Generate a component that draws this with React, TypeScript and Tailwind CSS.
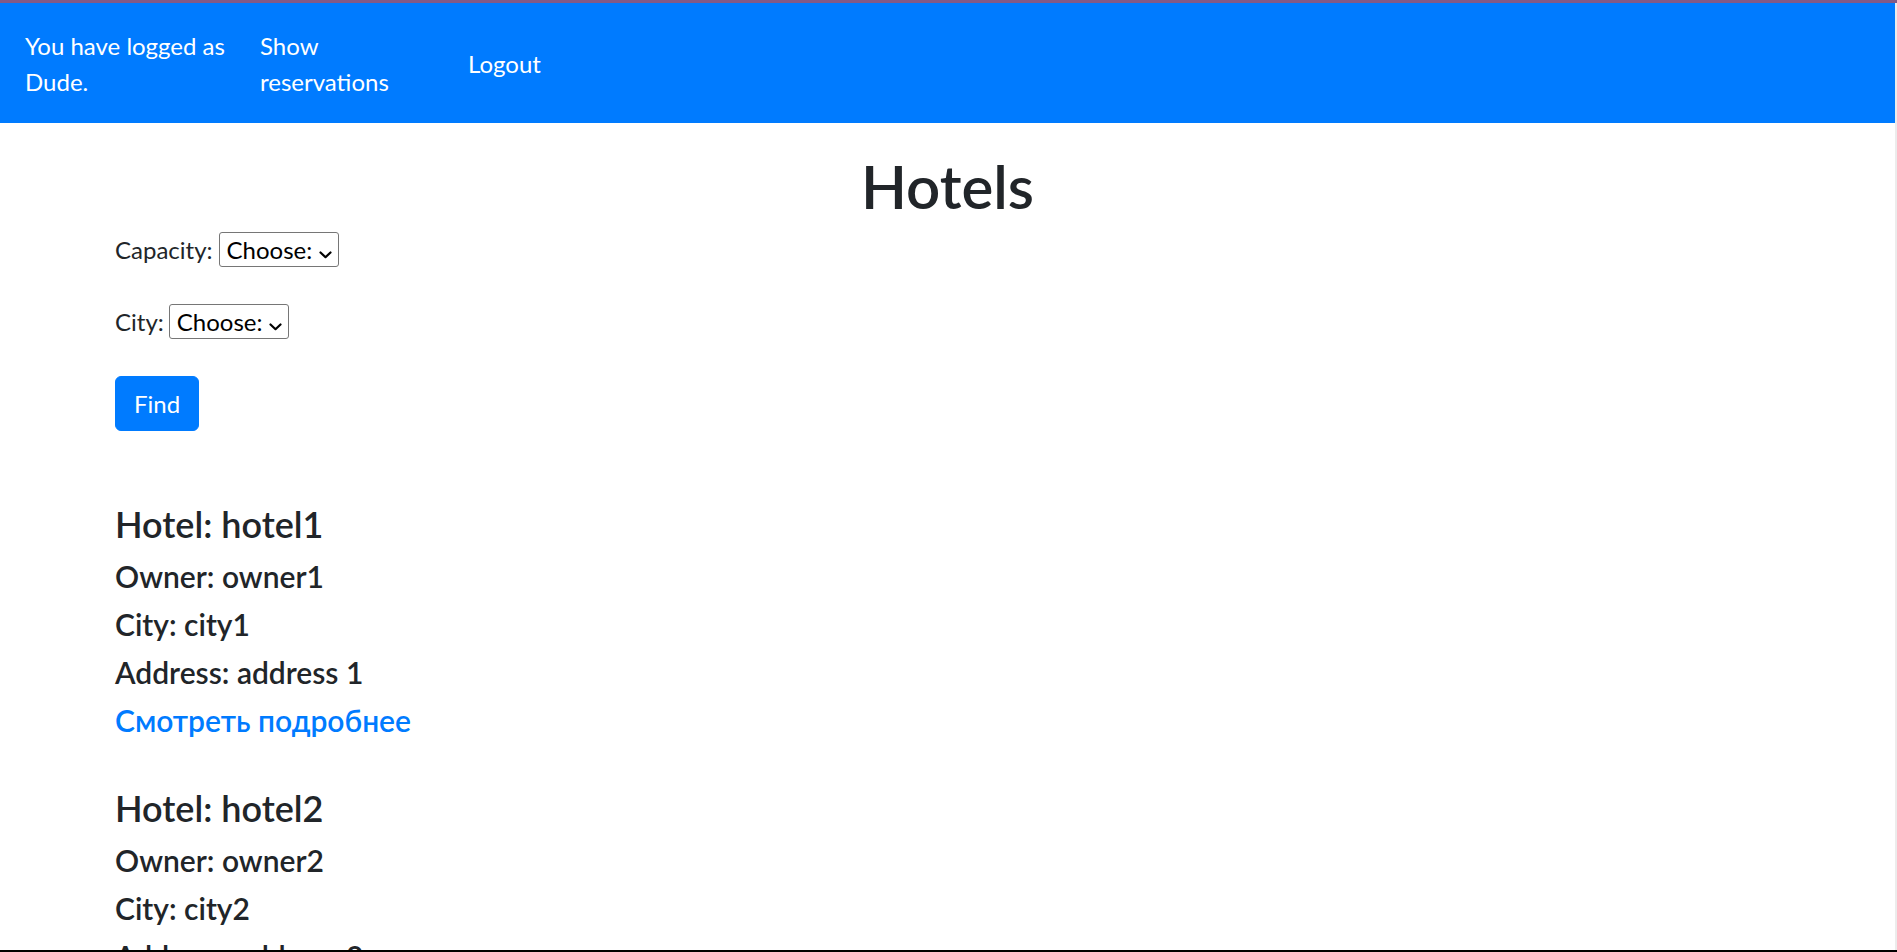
import { useState } from 'react';

const hotels = [
  { id: 1, name: 'hotel1', owner: 'owner1', city: 'city1', address: 'address 1' },
  { id: 2, name: 'hotel2', owner: 'owner2', city: 'city2', address: 'address 2' },
];

const font = "font-['Lato','Noto_Sans',sans-serif]";

const Chevron = () => (
  <svg
    className="pointer-events-none absolute right-[7px] top-[19px] h-[8px] w-[13px]"
    viewBox="0 0 13 8"
    fill="none"
    stroke="#000"
    strokeWidth="2.2"
    strokeLinecap="round"
    strokeLinejoin="round"
  >
    <path d="M1.5 1.5 6.5 6.2 11.5 1.5" />
  </svg>
);

const ChooseSelect = ({ value, onChange }: { value: string; onChange: (v: string) => void }) => (
  <div className="relative">
    <select
      value={value}
      onChange={(e) => onChange(e.target.value)}
      className={`${font} h-[35px] w-[120px] appearance-none rounded-[3px] border border-[#767676] bg-white pl-[7px] pr-[24px] text-[24px] leading-[33px] text-black`}
    >
      <option value="">Choose:</option>
      <option value="1">1</option>
      <option value="2">2</option>
    </select>
    <Chevron />
  </div>
);

export default function App() {
  const [capacity, setCapacity] = useState('');
  const [city, setCity] = useState('');

  return (
    <div className={`${font} flex h-[952px] w-full flex-col overflow-hidden bg-white text-[#212529]`}>
      <div className="h-[3px] shrink-0 bg-[#835a87]" />

      <div className="flex min-h-0 flex-1">
        <div className="min-w-0 flex-1 overflow-hidden">
          <nav className="flex h-[120px] items-center bg-[#007bff] pt-[2px] pl-[25px] text-[24px] leading-[36px] text-white">
            <div className="w-[235px]">
              You have logged as
              <br />
              Dude.
            </div>
            <a href="#" className="w-[208px]">
              Show
              <br />
              reservations
            </a>
            <a href="#">Logout</a>
          </nav>

          <main className="mx-auto w-[1710px] px-[22.5px]">
            <h1 className="mt-[27px] mb-[10px] text-center text-[60px] leading-[72px] font-semibold">Hotels</h1>

            <form className="flex flex-col items-start gap-[37px] text-[24px] leading-[36px]" onSubmit={(e) => e.preventDefault()}>
              <label className="flex h-[35px] items-center gap-[6px]">
                Capacity:
                <ChooseSelect value={capacity} onChange={setCapacity} />
              </label>
              <label className="flex h-[35px] items-center gap-[5px]">
                City:
                <ChooseSelect value={city} onChange={setCity} />
              </label>
              <button
                type="submit"
                className="rounded-[6px] border border-[#007bff] bg-[#007bff] px-[18px] py-[9px] text-[24px] leading-[35px] text-white"
              >
                Find
              </button>
            </form>

            <div className="mt-[72px] flex flex-col gap-[37px]">
              {hotels.map((h) => (
                <div key={h.id} className="flex flex-col">
                  <h4 className="mb-[12px] text-[36px] leading-[43px] font-semibold">Hotel: {h.name}</h4>
                  <h5 className="mb-[12px] text-[30px] leading-[36px] font-semibold">Owner: {h.owner}</h5>
                  <h5 className="mb-[12px] text-[30px] leading-[36px] font-semibold">City: {h.city}</h5>
                  <h5 className="mb-[12px] text-[30px] leading-[36px] font-semibold">Address: {h.address}</h5>
                  <h5 className="mb-[12px] text-[30px] leading-[36px] font-semibold">
                    <a href="#" className="text-[#007bff]">
                      Смотреть подробнее
                    </a>
                  </h5>
                </div>
              ))}
            </div>
          </main>
        </div>
        <div className="w-[2px] shrink-0 bg-[#ececec]" />
      </div>

      <div className="h-[2px] shrink-0 bg-black" />
    </div>
  );
}
